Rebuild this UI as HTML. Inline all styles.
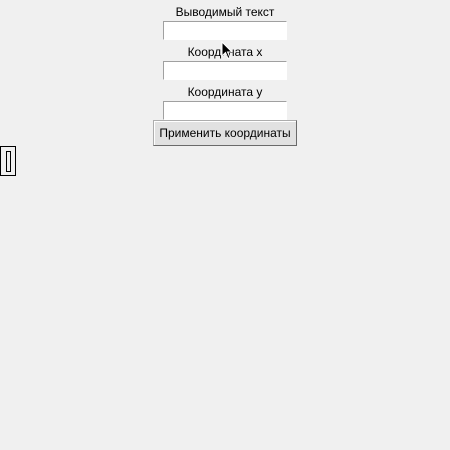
<!DOCTYPE html>
<html><head><style>
body{margin:0;width:450px;height:450px;background:#f0f0f0;position:relative;overflow:hidden;font-family:"Liberation Sans","DejaVu Sans",sans-serif;font-size:12px;color:#000}
.l{position:absolute;left:0;width:450px;text-align:center;line-height:14px}
.e{position:absolute;left:163px;width:122px;height:17px;background:#fff;border-top:1px solid #a0a0a0;border-left:1px solid #a0a0a0;border-right:1px solid #fff;border-bottom:1px solid #fff}
.b{position:absolute;left:153px;top:120px;width:142px;height:24px;background:#e1e1e1;border:1px solid #adadad;border-right-color:#6a6a6a;border-bottom-color:#6a6a6a;box-shadow:inset 1px 1px 0 #fff;text-align:center;line-height:24px}
</style></head><body>
<div class="l" style="top:5px">Выводимый текст</div>
<div class="e" style="top:21px"></div>
<div class="l" style="top:45px">Координата x</div>
<div class="e" style="top:61px"></div>
<div class="l" style="top:85px">Координата y</div>
<div class="e" style="top:101px"></div>
<div class="b">Применить координаты</div>
<div style="position:absolute;left:0;top:146px;width:14px;height:28px;border:1px solid #000"></div>
<div style="position:absolute;left:6px;top:151px;width:3px;height:19px;border:1px solid #000"></div>
<svg style="position:absolute;left:221px;top:41px" width="14" height="20"><path d="M1 1 L1 15 L4.5 11.5 L7 17.5 L9 16.5 L6.5 11 L11 11 Z" fill="#000" stroke="#fff" stroke-width="1"/></svg>
</body></html>
